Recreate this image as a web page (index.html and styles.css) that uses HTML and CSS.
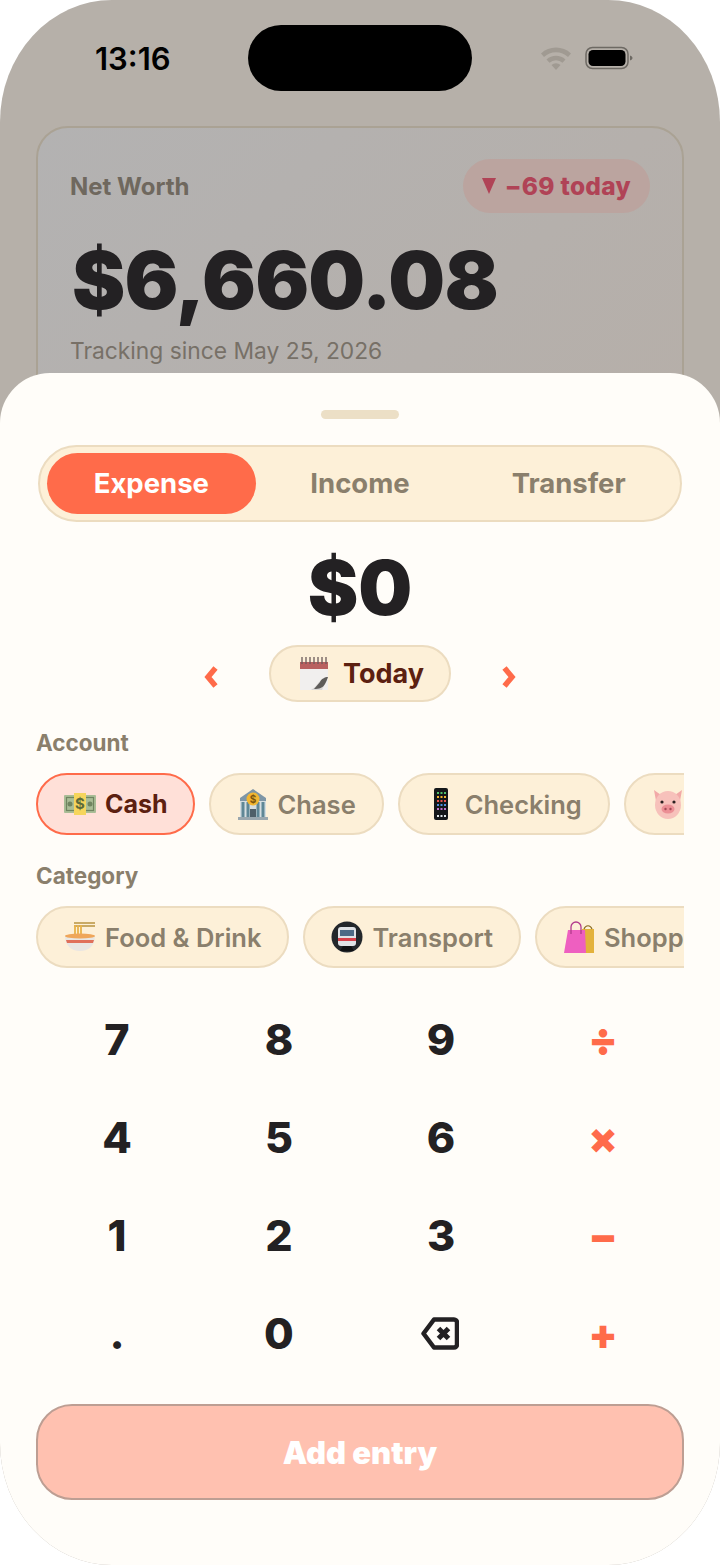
FILE: index.html
```html
<!DOCTYPE html>
<html lang="en">
<head>
    <meta charset="UTF-8">
    <meta name="viewport" content="width=device-width, initial-scale=1.0">
    <title>Add Entry</title>
    <link rel="stylesheet" href="styles.css">
</head>
<body>
    <div class="phone">
        <!-- Dimmed page behind the sheet -->
        <div class="status-bar">
            <span class="time">13:16</span>
            <div class="island"></div>
            <div class="status-icons">
                <svg class="wifi" width="32" height="24" viewBox="0 0 32 24"><path d="M1 7.500a22 22 0 0 1 30 0l-3 3.400a17.500 17.500 0 0 0-24 0z" fill="#a09a92"/><path d="M6.500 13.500a14 14 0 0 1 19 0l-3 3.300a9.500 9.500 0 0 0-13 0z" fill="#a09a92"/><path d="M11.500 19a6.500 6.500 0 0 1 9 0L16 24z" fill="#a09a92"/></svg>
                <svg class="battery" width="48" height="24" viewBox="0 0 48 24"><rect x="1" y="1.500" width="42" height="21" rx="6.500" fill="none" stroke="#6d6963" stroke-width="1.500"/><rect x="3.500" y="4" width="37" height="16" rx="4.500" fill="#000"/><path d="M45 9.500c1.500.4 2.500 1.300 2.500 2.500s-1 2.100-2.500 2.500z" fill="#6d6963"/></svg>
            </div>
        </div>

        <div class="worth-card">
            <div class="worth-top">
                <span class="worth-label">Net Worth</span>
                <span class="worth-badge">
                    <svg width="14" height="16" viewBox="0 0 14 16"><path d="M0 0h14L7 16z" fill="#b04356"/></svg>
                    <span>−69 today</span>
                </span>
            </div>
            <div class="worth-value">$6,660.08</div>
            <div class="worth-since">Tracking since May 25, 2026</div>
        </div>

        <!-- Add entry sheet -->
        <div class="sheet">
            <div class="handle"></div>

            <div class="segment">
                <button type="button" class="segment-btn active">Expense</button>
                <button type="button" class="segment-btn">Income</button>
                <button type="button" class="segment-btn">Transfer</button>
            </div>

            <div class="amount">$0</div>

            <div class="date-row">
                <svg class="chevron" width="16" height="22" viewBox="0 0 16 22"><path d="M12.500 2 5 11l7.500 9" fill="none" stroke="#ff6b4a" stroke-width="5.500"/></svg>
                <button type="button" class="date-pill">
                    <svg width="30" height="33" viewBox="0 0 30 33"><rect x="1" y="5" width="28" height="28" fill="#f1efee"/><rect x="1" y="5" width="28" height="7" fill="#b8605f"/><path d="M3 0v7M7 0v7M11 0v7M15 0v7M19 0v7M23 0v7M27 0v7" stroke="#6b5a5a" stroke-width="1.300"/><path d="M29 20c-3 1-7 3-9 5-2 3-5 6-8 8h11z" fill="#d9d7d5"/><path d="M29 20c-3 0-7 2-8 5l-6 7c5 0 9-1 11-5 1-2 2-4 3-7z" fill="#5e5c5a"/></svg>
                    <span>Today</span>
                </button>
                <svg class="chevron" width="16" height="22" viewBox="0 0 16 22"><path d="m3.500 2 7.500 9-7.500 9" fill="none" stroke="#ff6b4a" stroke-width="5.500"/></svg>
            </div>

            <div class="field-label">Account</div>
            <div class="chip-row">
                <button type="button" class="chip selected">
                    <svg width="32" height="22" viewBox="0 0 32 22"><rect x="0" y="2" width="32" height="18" rx="1" fill="#a9bd96"/><rect x="2.500" y="4.500" width="27" height="13" fill="none" stroke="#6f8560" stroke-width="1.200"/><circle cx="6" cy="11" r="2.500" fill="#6f8560"/><circle cx="26" cy="11" r="2.500" fill="#6f8560"/><rect x="10" y="0" width="12" height="22" fill="#f6d55c"/><text x="16" y="15.500" class="svg-dollar">$</text></svg>
                    <span>Cash</span>
                </button>
                <button type="button" class="chip">
                    <svg width="32" height="32" viewBox="0 0 32 32"><path d="M16 1 3 10v3h26v-3z" fill="#7e96a6"/><rect x="3" y="13" width="26" height="17" fill="#d5dde0"/><path d="M6 14v15M11 14v15M21 14v15M26 14v15" stroke="#5f8796" stroke-width="3"/><rect x="13" y="21" width="6" height="9" fill="#4f5f68"/><rect x="1" y="29" width="30" height="3" fill="#9aa7ae"/><circle cx="16" cy="11" r="6.500" fill="#f2b632"/><text x="16" y="14.500" class="svg-dollar small">$</text></svg>
                    <span>Chase</span>
                </button>
                <button type="button" class="chip">
                    <svg class="chip-phone" width="16" height="32" viewBox="0 0 14 32"><rect width="14" height="32" rx="2" fill="#14171a"/><path d="M3 5h2M6.500 5h2M10 5h2" stroke="#4ec06a" stroke-width="2"/><path d="M3 9h2M6.500 9h2M10 9h2" stroke="#f2b632" stroke-width="2"/><path d="M3 13h2M6.500 13h2M10 13h2" stroke="#e8544f" stroke-width="2"/><path d="M3 17h2M6.500 17h2M10 17h2" stroke="#4d8fe0" stroke-width="2"/><path d="M3 21h2M6.500 21h2M10 21h2" stroke="#c070d0" stroke-width="2"/><path d="M3 28h2M6.500 28h2M10 28h2" stroke="#dfe6ea" stroke-width="2"/></svg>
                    <span>Checking</span>
                </button>
                <button type="button" class="chip pig-chip">
                    <svg width="32" height="30" viewBox="0 0 32 30"><path d="M2 1 9 6l-5 6zM30 1l-7 5 5 6z" fill="#f2a9a8"/><ellipse cx="16" cy="16" rx="13" ry="14" fill="#f7c1bb"/><circle cx="10" cy="13" r="1.600" fill="#2b2020"/><circle cx="22" cy="13" r="1.600" fill="#2b2020"/><ellipse cx="16" cy="20" rx="6.500" ry="4.500" fill="#ec8f95"/><circle cx="13.500" cy="20" r="1.200" fill="#a44a55"/><circle cx="18.500" cy="20" r="1.200" fill="#a44a55"/></svg>
                </button>
            </div>

            <div class="field-label">Category</div>
            <div class="chip-row">
                <button type="button" class="chip">
                    <svg width="32" height="30" viewBox="0 0 32 30"><path d="M10 1h21M10 4h21" stroke="#b8923f" stroke-width="1.500"/><path d="M11 3v12M14 3v12M17 3v12" stroke="#e8b24a" stroke-width="1.800"/><path d="M1 14h30c0 9-6 15-15 15S1 23 1 14z" fill="#e9e6e2"/><path d="M2 18h28l-1 3H3z" fill="#e0705a"/><ellipse cx="16" cy="14" rx="15" ry="2.500" fill="#efa65a"/></svg>
                    <span>Food &amp; Drink</span>
                </button>
                <button type="button" class="chip">
                    <svg width="32" height="32" viewBox="0 0 32 32"><circle cx="16" cy="16" r="15.500" fill="#23272b"/><rect x="7" y="6" width="18" height="19" rx="3" fill="#dfe2e6"/><rect x="9" y="9" width="14" height="6" fill="#4c6a86"/><rect x="7" y="17" width="18" height="3" fill="#d6404a"/><path d="M9 30l3-5h8l3 5z" fill="#0f1113"/></svg>
                    <span>Transport</span>
                </button>
                <button type="button" class="chip">
                    <svg width="32" height="32" viewBox="0 0 32 32"><rect x="19" y="8" width="12" height="24" fill="#e3b23c"/><path d="M21 8a4.500 6 0 0 1 8 0" fill="none" stroke="#8a6d24" stroke-width="1.200"/><path d="M5 9h17l1 23H1z" fill="#ee5fc0"/><path d="M8 13V6a5 5 0 0 1 10 0v7" fill="none" stroke="#b23a8c" stroke-width="1.300"/></svg>
                    <span>Shopping</span>
                </button>
            </div>

            <div class="keypad">
                <button type="button" class="key">7</button>
                <button type="button" class="key">8</button>
                <button type="button" class="key">9</button>
                <button type="button" class="key op">÷</button>
                <button type="button" class="key">4</button>
                <button type="button" class="key">5</button>
                <button type="button" class="key">6</button>
                <button type="button" class="key op">×</button>
                <button type="button" class="key">1</button>
                <button type="button" class="key">2</button>
                <button type="button" class="key">3</button>
                <button type="button" class="key op">−</button>
                <button type="button" class="key dot">.</button>
                <button type="button" class="key">0</button>
                <button type="button" class="key backspace">
                    <svg width="38" height="33" viewBox="0 0 38 33"><path d="M13 2.500h20a3 3 0 0 1 3 3v22a3 3 0 0 1-3 3H13L2.500 16.500z" fill="none" stroke="#232123" stroke-width="4.500" stroke-linejoin="round"/><path d="m17.500 11.500 10 10M27.500 11.500l-10 10" stroke="#232123" stroke-width="5"/></svg>
                </button>
                <button type="button" class="key op">+</button>
            </div>

            <button type="button" class="add-btn">Add entry</button>
        </div>
    </div>
</body>
</html>
```

FILE: styles.css
```css
* {
    box-sizing: border-box;
}

body {
    margin: 0;
    background-color: #fff;
    font-family: Inter, "Liberation Sans", sans-serif;
}

button {
    font-family: inherit;
    padding: 0;
    border: none;
    background: none;
}

.phone {
    position: relative;
    width: 720px;
    height: 1565px;
    overflow: hidden;
    background-color: #b6b0a9;
    border-radius: 112px / 122px;
}

/* Status bar */
.status-bar {
    display: grid;
    grid-template-columns: 248px 224px 248px;
    padding-top: 25px;
}

.time {
    padding-left: 95px;
    align-self: center;
    font-size: 31px;
    font-weight: 600;
    color: #000;
}

.island {
    height: 66px;
    background-color: #000;
    border-radius: 33px;
}

.status-icons {
    display: flex;
    align-items: center;
    gap: 13px;
    padding-left: 68px;
}

/* Net worth card */
.worth-card {
    margin: 35px 36px 0;
    padding: 31px 32px 40px;
    background: linear-gradient(135deg, #b3b2b2, #b6afa9);
    border: 2px solid #aaa294;
    border-radius: 32px;
}

.worth-top {
    display: flex;
    justify-content: space-between;
    align-items: center;
}

.worth-label {
    font-size: 24px;
    font-weight: 700;
    color: #6f685e;
}

.worth-badge {
    height: 54px;
    padding: 0 19px;
    display: flex;
    align-items: center;
    gap: 9px;
    font-size: 24.500px;
    font-weight: 800;
    letter-spacing: 0.3px;
    color: #b04356;
    background-color: #bba49f;
    border-radius: 27px;
}

.worth-value {
    margin-top: 20px;
    padding-left: 2px;
    font-size: 80px;
    line-height: 94px;
    font-weight: 900;
    letter-spacing: -0.8px;
    color: #232123;
}

.worth-since {
    margin-top: 10px;
    font-size: 22.800px;
    line-height: 28px;
    color: #777067;
}

/* Sheet */
.sheet {
    position: absolute;
    top: 373px;
    left: 0;
    right: 0;
    bottom: 0;
    padding: 37px 36px 0;
    background-color: #fffdf9;
    border-radius: 50px 50px 0 0;
}

.handle {
    width: 78px;
    height: 9px;
    margin: 0 auto;
    background-color: #ecdfc6;
    border-radius: 5px;
}

.segment {
    display: grid;
    grid-template-columns: repeat(3, 1fr);
    height: 77px;
    margin: 26px 2px 0;
    padding: 6px 7px;
    background-color: #fdf0d8;
    border: 2px solid #ecdcc0;
    border-radius: 39px;
}

.segment-btn {
    padding-bottom: 2px;
    font-size: 27.500px;
    font-weight: 700;
    color: #8a7f6c;
    border-radius: 31px;
}

.segment-btn.active {
    color: #fff;
    background-color: #ff6b4a;
}

.amount {
    margin-top: 20px;
    text-align: center;
    font-size: 76px;
    line-height: 90px;
    font-weight: 900;
    color: #232123;
}

.date-row {
    display: flex;
    justify-content: center;
    align-items: center;
    gap: 50px;
    margin-top: 13px;
}

.chevron {
    margin-top: 6px;
}

.date-pill {
    display: flex;
    align-items: center;
    gap: 14px;
    height: 57px;
    padding: 0 25px 0 28px;
    font-size: 27px;
    font-weight: 700;
    color: #5c2010;
    background-color: #fdf0d8;
    border: 2px solid #ecdcc0;
    border-radius: 29px;
}

.field-label {
    margin-top: 28px;
    font-size: 22.500px;
    line-height: 26px;
    font-weight: 700;
    color: #8a7f6c;
}

.chip-row {
    display: flex;
    gap: 14px;
    margin-top: 17px;
    overflow: hidden;
}

.chip {
    flex: none;
    display: flex;
    align-items: center;
    gap: 9px;
    height: 62px;
    padding: 0 26px;
    font-size: 25.500px;
    font-weight: 600;
    color: #8a7f6c;
    background-color: #fdf0d8;
    border: 2px solid #ecdcc0;
    border-radius: 31px;
}

.chip.selected {
    padding-right: 25px;
    font-size: 25px;
    font-weight: 700;
    color: #5c2010;
    background-color: #ffe0d8;
    border-color: #ff6b4a;
}

.chip.pig-chip {
    width: 100px;
}

.chip-phone {
    margin: 0 7px;
}

.svg-dollar {
    font-size: 15px;
    font-weight: 700;
    text-anchor: middle;
    fill: #5d6b3a;
}

.svg-dollar.small {
    font-size: 10px;
    fill: #7a5410;
}

/* Keypad */
.keypad {
    display: grid;
    grid-template-columns: repeat(4, 1fr);
    grid-auto-rows: 98px;
    margin-top: 22px;
}

.key {
    display: flex;
    justify-content: center;
    align-items: center;
    font-size: 43px;
    font-weight: 800;
    color: #232123;
}

.key.op {
    font-weight: 900;
    font-size: 42px;
    color: #ff6b4a;
}

.key.backspace {
    padding-right: 2px;
}

.add-btn {
    display: block;
    width: 100%;
    height: 96px;
    margin-top: 22px;
    font-size: 31px;
    font-weight: 900;
    color: #fff;
    background-color: #ffc1b0;
    border: 2px solid #bd9e93;
    border-radius: 36px;
}
```
